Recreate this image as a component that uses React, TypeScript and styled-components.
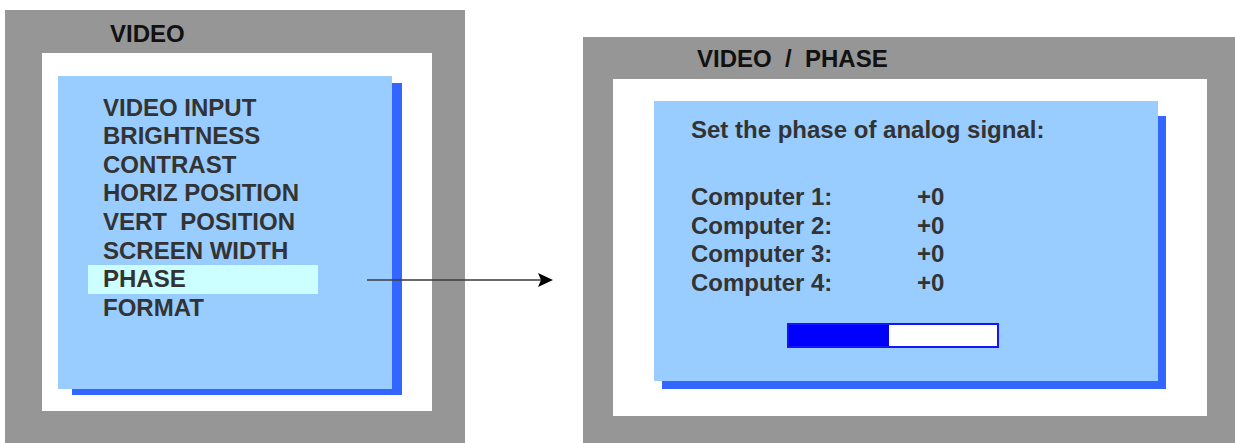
import React from "react";
import styled, { createGlobalStyle } from "styled-components";

const GlobalStyle = createGlobalStyle`
  html, body {
    margin: 0;
    padding: 0;
    background: #ffffff;
  }
  body {
    font-family: "Liberation Sans", Arial, sans-serif;
    overflow: hidden;
  }
`;

const menuItems = [
  "VIDEO INPUT",
  "BRIGHTNESS",
  "CONTRAST",
  "HORIZ POSITION",
  "VERT  POSITION",
  "SCREEN WIDTH",
  "PHASE",
  "FORMAT",
];

const computers = [
  { name: "Computer 1:", value: "+0" },
  { name: "Computer 2:", value: "+0" },
  { name: "Computer 3:", value: "+0" },
  { name: "Computer 4:", value: "+0" },
];

const phaseLevel = 48;

const App = () => {
  return (
    <Page>
      <GlobalStyle />
      <Screen $width={460} $height={433}>
        <Title $height={43} $top={10} $left={105}>
          VIDEO
        </Title>
        <Frame $width={390} $height={358} $left={37}>
          <Osd
            $width={334}
            $height={313}
            $top={23}
            $left={16}
            $shadow="7px -10px -6px 14px"
          >
            <Menu>
              {menuItems.map((item) => (
                <MenuItem key={item} $active={item === "PHASE"}>
                  {item}
                </MenuItem>
              ))}
            </Menu>
          </Osd>
        </Frame>
      </Screen>

      <Screen $width={652} $height={406} $offset={27}>
        <Title $height={42} $top={7.5} $left={114}>
          {"VIDEO  /  PHASE"}
        </Title>
        <Frame $width={594} $height={337} $left={30}>
          <Osd
            $width={504}
            $height={280}
            $top={22}
            $left={41}
            $shadow="15px -8px -8px 8px"
          >
            <PhaseBody>
              <Line>Set the phase of analog signal:</Line>
              <ValueGrid>
                {computers.map((c) => (
                  <React.Fragment key={c.name}>
                    <Line>{c.name}</Line>
                    <Line>{c.value}</Line>
                  </React.Fragment>
                ))}
              </ValueGrid>
              <Track>
                <Fill style={{ width: `${phaseLevel}%` }} />
              </Track>
            </PhaseBody>
          </Osd>
        </Frame>
      </Screen>

      <Arrow width="186" height="14" viewBox="0 0 186 14">
        <line x1="0" y1="7" x2="176" y2="7" stroke="#3a3a3a" strokeWidth="1.6" />
        <polygon points="171,0 186,7 171,14 174,7" fill="#000000" />
      </Arrow>
    </Page>
  );
};

export default App;

const Page = styled.div`
  position: relative;
  display: flex;
  align-items: flex-start;
  gap: 118px;
  padding: 10px 0 0 5px;
  width: 1235px;
  height: 443px;
  box-sizing: border-box;
  overflow: hidden;
`;

const Screen = styled.div<{ $width: number; $height: number; $offset?: number }>`
  flex: none;
  display: flex;
  flex-direction: column;
  width: ${(p) => p.$width}px;
  height: ${(p) => p.$height}px;
  margin-top: ${(p) => p.$offset ?? 0}px;
  background: #969696;
`;

const Title = styled.div<{ $height: number; $top: number; $left: number }>`
  height: ${(p) => p.$height}px;
  box-sizing: border-box;
  padding: ${(p) => p.$top}px 0 0 ${(p) => p.$left}px;
  font-size: 24px;
  line-height: 28.6px;
  font-weight: bold;
  color: #111111;
  white-space: pre;
`;

const Frame = styled.div<{ $width: number; $height: number; $left: number }>`
  width: ${(p) => p.$width}px;
  height: ${(p) => p.$height}px;
  margin-left: ${(p) => p.$left}px;
  background: #ffffff;
  isolation: isolate;
  display: flex;
  align-items: flex-start;
`;

const Osd = styled.div<{
  $width: number;
  $height: number;
  $top: number;
  $left: number;
  $shadow: string;
}>`
  position: relative;
  width: ${(p) => p.$width}px;
  height: ${(p) => p.$height}px;
  margin: ${(p) => p.$top}px 0 0 ${(p) => p.$left}px;
  background: #99ccff;
  color: #333333;
  font-size: 24px;
  font-weight: bold;
  line-height: 28.6px;

  &::after {
    content: "";
    position: absolute;
    inset: ${(p) => p.$shadow};
    background: #3366ff;
    z-index: -1;
  }
`;

const Menu = styled.ul`
  list-style: none;
  margin: 0;
  padding: 17.6px 0 0 30px;
`;

const MenuItem = styled.li<{ $active?: boolean }>`
  width: 230px;
  box-sizing: border-box;
  padding-left: 15px;
  white-space: pre;
  background: ${(p) => (p.$active ? "#ccffff" : "transparent")};
`;

const PhaseBody = styled.div`
  display: flex;
  flex-direction: column;
  padding: 15px 0 0 37px;
`;

const Line = styled.div`
  white-space: pre;
`;

const ValueGrid = styled.div`
  display: grid;
  grid-template-columns: 226px auto;
  margin-top: 38.7px;
  line-height: 28.5px;
`;

const Track = styled.div`
  width: 212px;
  height: 25px;
  box-sizing: border-box;
  margin: 25.5px 0 0 96px;
  border: 2px solid #1414ff;
  background: #ffffff;
`;

const Fill = styled.div`
  height: 100%;
  background: #0000ff;
`;

const Arrow = styled.svg`
  position: absolute;
  left: 367px;
  top: 273px;
  display: block;
`;
